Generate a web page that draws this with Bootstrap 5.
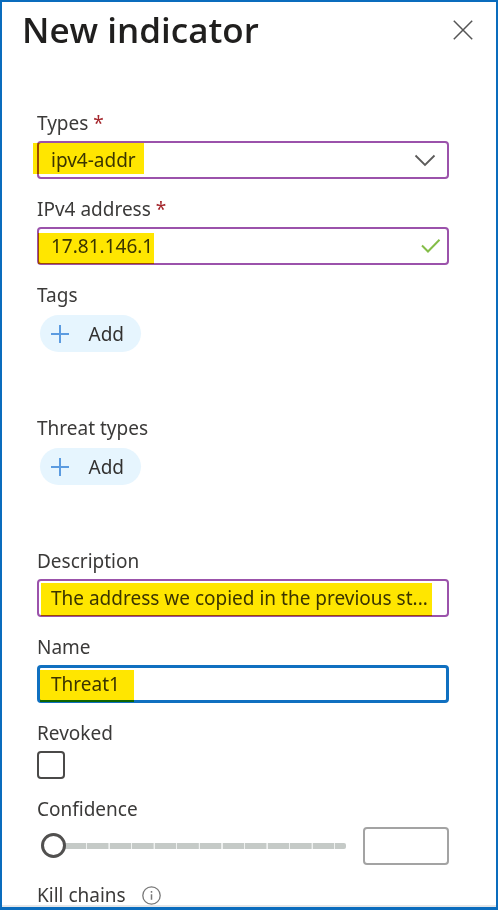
<!DOCTYPE html>
<html lang="en">
<head>
<meta charset="utf-8">
<meta name="viewport" content="width=device-width, initial-scale=1">
<title>New indicator</title>
<link href="https://cdn.jsdelivr.net/npm/bootstrap@5.3.0/dist/css/bootstrap.min.css" rel="stylesheet">
<style>
  body { font-family: "Noto Sans", "Open Sans", sans-serif; font-size: 19px; line-height: 24px; color: #3b3a39; background: #fff; }
  .panel { border: 2px solid #0a6cbd; border-bottom-width: 3px; box-shadow: inset 0 -2px #e4e6e8; }
  .panel-head { padding: 4px 21px 0 20px; }
  .panel-title { font-family: "Open Sans", sans-serif; font-size: 35px; line-height: 48px; font-weight: 600; color: #201f1e; }
  .icon-btn { width: 24px; height: 24px; }
  .panel-form { padding: 57px 47px 0 35px; }
  .field { margin-bottom: 18px; }
  .field-chips { margin-bottom: 64px; }
  .field-label { display: block; margin-bottom: 6px; }
  .req { color: #a4262c; }
  .box, .box:focus { height: 38px; padding: 0 12px; border: 2px solid #9b52ab; border-radius: 4px; font-size: 19px; line-height: 24px; color: #3b3a39; background: #fff; box-shadow: none; }
  .box-active, .box-active:focus { border-color: #1070c0; border-width: 3px; padding: 0 11px; }
  .box-num, .box-num:focus { width: 86px; border-color: #a3a3a3; }
  /* marker strokes laid over the fields */
  .hl { position: absolute; background: #ffe600; mix-blend-mode: multiply; pointer-events: none; }
  .hl-type { left: -4px; top: 2px; bottom: 5px; width: 111px; }
  .hl-addr { left: 1px; top: 6px; bottom: 1px; width: 116px; }
  .hl-desc { left: 4px; top: 4px; bottom: 1px; right: 17px; }
  .hl-name { left: 3px; top: 5px; bottom: 1px; width: 94px; }
  .in-icon { position: absolute; top: 0; bottom: 0; margin: auto 0; pointer-events: none; }
  .chip { margin: 8px 0 0 3px; height: 37px; width: 101px; padding: 0 17px 0 11px; border-radius: 19px; background: #e6f5fe; color: #323130; font-size: 19px; line-height: 24px; }
  .tick-box { width: 28px; height: 28px; margin: 0; border: 2px solid #4a4948; display: block; }
  .tick-box.form-check-input[type=checkbox] { border-radius: 4px; }
  .slider { -webkit-appearance: none; appearance: none; height: 26px; margin: 0 17px 0 4px; background: transparent; }
  .slider::-webkit-slider-runnable-track { height: 6px; border-radius: 2px; background: repeating-linear-gradient(90deg, #eff1f0 0 1px, #c5cac7 1px 7.2%, #eff1f0 7.4%); }
  .slider::-webkit-slider-thumb { -webkit-appearance: none; width: 25px; height: 25px; margin-top: -10px; border: 3px solid #51504f; border-radius: 50%; background: #fff; }
</style>
<script src="https://cdn.jsdelivr.net/npm/bootstrap@5.3.0/dist/js/bootstrap.bundle.min.js"></script>
</head>
<body>
<main class="panel vh-100 overflow-hidden">
  <header class="panel-head d-flex justify-content-between align-items-center">
    <h1 class="panel-title m-0">New indicator</h1>
    <button type="button" class="btn icon-btn p-0 border-0 d-flex align-items-center justify-content-center" aria-label="Close">
      <svg width="20" height="20" viewBox="0 0 20 20" fill="none" stroke="#555" stroke-width="1.5"><path d="M.8.8 19.2 19.2M19.2.8.8 19.2"/></svg>
    </button>
  </header>
  <form class="panel-form">
    <div class="field">
      <label class="field-label" for="types">Types <span class="req">*</span></label>
      <div class="position-relative">
        <select class="form-control box" id="types"><option>ipv4-addr</option></select>
        <svg class="in-icon end-0 me-2" width="32" height="14" viewBox="0 0 32 14" fill="none" stroke="#5c5b5a" stroke-width="1.8"><path d="m6.500 2.500 9.500 9.500 9.500-9.500"/></svg>
        <span class="hl hl-type"></span>
      </div>
    </div>
    <div class="field">
      <label class="field-label" for="addr">IPv4 address <span class="req">*</span></label>
      <div class="position-relative">
        <input class="form-control box" id="addr" value="17.81.146.1">
        <svg class="in-icon end-0 me-2" width="20" height="16" viewBox="0 0 20 16" fill="none" stroke="#84bd48" stroke-width="2"><path d="m1 7.500 6 6L18.500 1.800"/></svg>
        <span class="hl hl-addr"></span>
      </div>
    </div>
    <div class="field-chips">
      <span class="field-label" id="tags">Tags</span>
      <button type="button" class="btn chip border-0 d-flex align-items-center justify-content-between" aria-describedby="tags">
        <svg width="18" height="18" viewBox="0 0 18 18" stroke="#5b9be0" stroke-width="2"><path d="M9 0v18M0 9h18"/></svg><span>Add</span>
      </button>
    </div>
    <div class="field-chips">
      <span class="field-label" id="threats">Threat types</span>
      <button type="button" class="btn chip border-0 d-flex align-items-center justify-content-between" aria-describedby="threats">
        <svg width="18" height="18" viewBox="0 0 18 18" stroke="#5b9be0" stroke-width="2"><path d="M9 0v18M0 9h18"/></svg><span>Add</span>
      </button>
    </div>
    <div class="field">
      <label class="field-label" for="desc">Description</label>
      <div class="position-relative">
        <input class="form-control box" id="desc" value="The address we copied in the previous st...">
        <span class="hl hl-desc"></span>
      </div>
    </div>
    <div class="field">
      <label class="field-label" for="name">Name</label>
      <div class="position-relative">
        <input class="form-control box box-active" id="name" value="Threat1">
        <span class="hl hl-name"></span>
      </div>
    </div>
    <div class="field">
      <label class="field-label" for="revoked">Revoked</label>
      <input type="checkbox" class="form-check-input tick-box" id="revoked">
    </div>
    <div class="field">
      <label class="field-label" for="conf">Confidence</label>
      <div class="d-flex align-items-center">
        <input type="range" class="slider flex-grow-1" id="conf" min="0" max="100" value="0">
        <input class="form-control box box-num" aria-label="Confidence value">
      </div>
    </div>
    <div class="d-flex align-items-center gap-3">
      <span>Kill chains</span>
      <svg width="19" height="19" viewBox="0 0 19 19" fill="none" stroke="#777" stroke-width="1.3"><circle cx="9.500" cy="9.500" r="8.700"/><path d="M9.500 8.300v5.500M9.500 5v1.700" stroke-width="1.500"/></svg>
    </div>
  </form>
</main>
</body>
</html>
